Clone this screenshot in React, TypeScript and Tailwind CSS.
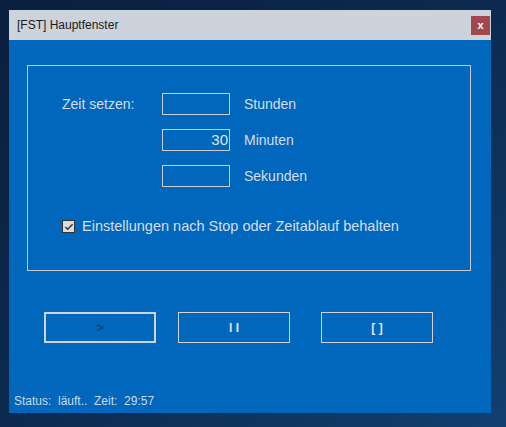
import React, { useState } from 'react';

const TimeInput: React.FC<{ value?: string }> = ({ value = '' }) => (
  <div className="w-[68px] h-[22px] border border-[#c9ced6] flex items-center justify-end pr-[1px] text-[15px] text-[#dfe5ee]">
    {value}
  </div>
);

export default function App() {
  const [keep, setKeep] = useState(true);

  return (
    <div
      className="w-[506px] h-[427px] pt-[10px] pl-[9px] bg-gradient-to-br from-[#0a1f3d] via-[#0c2a50] to-[#11406f] overflow-hidden"
      style={{ fontFamily: '"Liberation Sans", Arial, sans-serif' }}
    >
      <div className="w-[482px] h-[403px] bg-[#0067bd] flex flex-col">
        {/* Titelleiste */}
        <div className="h-[30px] bg-[#cdd3da] flex items-center justify-between pl-[8px] pr-[1px]">
          <span className="text-[12px] text-[#1a1a1a]">[FST] Hauptfenster</span>
          <button className="w-[19px] h-[19px] bg-[#a2474f] text-white text-[11px] font-bold flex items-center justify-center leading-none">
            x
          </button>
        </div>

        <div className="flex-1 flex flex-col px-[18px] pt-[25px] text-[#d6dde8]">
          {/* Gruppenbox */}
          <div className="w-[444px] h-[206px] border border-[#c4cad3] pl-[34px] pt-[27px]">
            <div className="grid grid-cols-[86px_68px_auto] gap-x-[14px] gap-y-[14px] items-center text-[14px]">
              <span>Zeit setzen:</span>
              <TimeInput />
              <span>Stunden</span>
              <span />
              <TimeInput value="30" />
              <span>Minuten</span>
              <span />
              <TimeInput />
              <span>Sekunden</span>
            </div>

            <label className="mt-[29px] flex items-center gap-[7px] text-[14.5px] cursor-pointer">
              <span
                onClick={() => setKeep(!keep)}
                className="w-[13px] h-[13px] border border-[#333] bg-[#dcdcdc] flex items-center justify-center"
              >
                {keep && (
                  <svg viewBox="0 0 11 11" className="w-[10px] h-[10px]">
                    <path d="M1.5 5.5 L4 8 L9.5 2.5" stroke="#333" strokeWidth="1.6" fill="none" />
                  </svg>
                )}
              </span>
              <span>Einstellungen nach Stop oder Zeitablauf behalten</span>
            </label>
          </div>

          {/* Steuerknöpfe */}
          <div className="mt-[41px] flex pl-[17px] gap-[22px]">
            <button className="w-[112px] h-[31px] border-2 border-[#d0d3d8] text-[#1d3557] text-[13px] flex items-center justify-center">
              &gt;
            </button>
            <button className="w-[112px] h-[31px] border border-[#d0d3d8] text-[#dfe5ee] text-[12px] font-bold flex items-center justify-center">
              I I
            </button>
            <button className="ml-[9px] w-[112px] h-[31px] border border-[#d0d3d8] text-[#dfe5ee] text-[12px] font-bold flex items-center justify-center">
              [ ]
            </button>
          </div>

          <div className="mt-auto mb-[3px] -ml-[13px] text-[12px] text-[#cfd8e6] whitespace-pre">
            Status:  läuft..  Zeit:  29:57
          </div>
        </div>
      </div>
    </div>
  );
}
